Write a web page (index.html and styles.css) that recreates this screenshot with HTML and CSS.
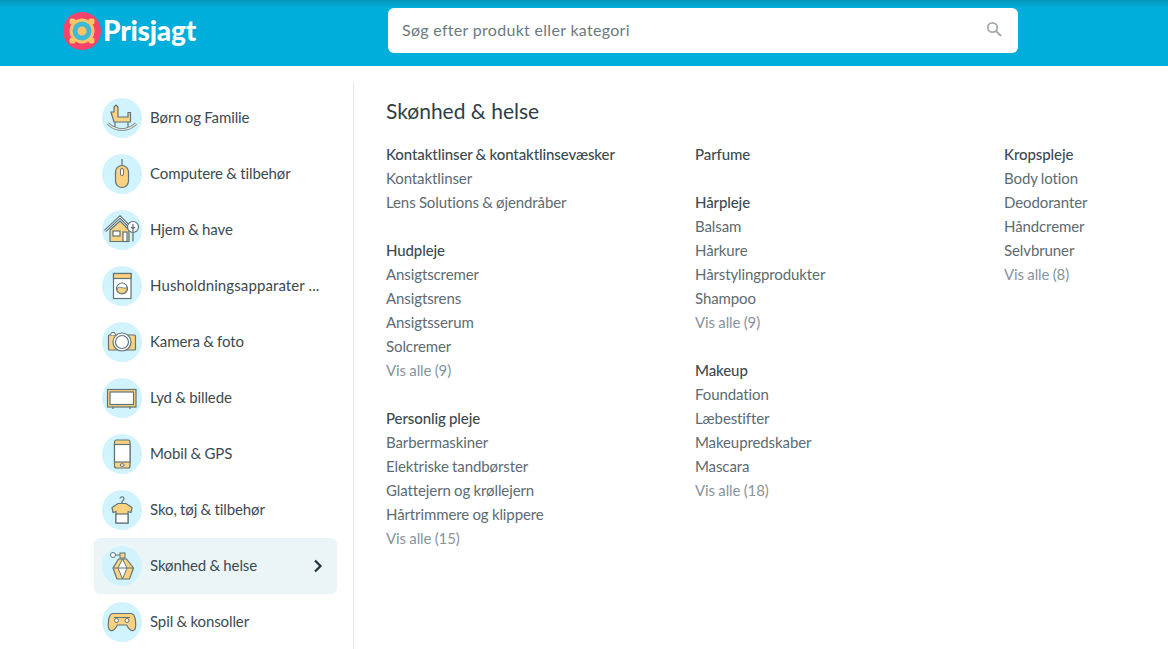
FILE: index.html
```html
<!DOCTYPE html>
<html lang="da">
<head>
    <meta charset="UTF-8">
    <meta name="viewport" content="width=device-width, initial-scale=1.0">
    <title>Prisjagt</title>
    <link rel="stylesheet" href="styles.css">
</head>
<body>

    <!-- top bar -->
    <header class="topbar">
        <a class="logo" href="#">
            <svg class="logo-mark" viewBox="0 0 38 38">
                <circle cx="19" cy="19" r="19" fill="#f5436b"/>
                <circle cx="19" cy="19" r="12.5" fill="#fbc465"/>
                <rect x="6.500" y="6.500" width="6" height="6" rx="2" fill="#fbc465"/>
                <rect x="25.500" y="6.500" width="6" height="6" rx="2" fill="#fbc465"/>
                <rect x="6.500" y="25.500" width="6" height="6" rx="2" fill="#fbc465"/>
                <rect x="25.500" y="25.500" width="6" height="6" rx="2" fill="#fbc465"/>
                <circle cx="19" cy="19" r="9.500" fill="#3fb9d6"/>
                <circle cx="19" cy="19" r="4.500" fill="#fbc465"/>
            </svg>
            <span class="logo-text">Prisjagt</span>
        </a>
        <div class="search">
            <span class="search-text">Søg efter produkt eller kategori</span>
            <svg class="search-icon" viewBox="0 0 16 16">
                <circle cx="6.500" cy="6.500" r="4.700" fill="none" stroke="#a3aaae" stroke-width="1.800"/>
                <path d="M10 10l5 5" stroke="#a3aaae" stroke-width="2" fill="none"/>
            </svg>
        </div>
    </header>

    <div class="main">
        <!-- categories -->
        <nav class="sidebar">
            <a class="cat" href="#">
                <span class="cat-icon">
                    <svg viewBox="0 0 40 40">
                        <path d="M9 14h3V9l2-2 2 2v10h10v-4.500h2.500V24H12z" fill="#fbd27f" stroke="#5f7378" stroke-width="1.200"/>
                        <path d="M13 24v6M26 24v6" stroke="#5f7378" stroke-width="1.200"/>
                        <path d="M6 25.500c8 8 20 8 28 0" fill="none" stroke="#5f7378" stroke-width="2.600"/>
                        <path d="M6 25.500c8 8 20 8 28 0" fill="none" stroke="#e8e8e0" stroke-width="1.200"/>
                    </svg>
                </span>
                <span class="cat-name">Børn og Familie</span>
            </a>
            <a class="cat" href="#">
                <span class="cat-icon">
                    <svg viewBox="0 0 40 40">
                        <path d="M20 5v7" stroke="#5f7378" stroke-width="1.200"/>
                        <rect x="13.500" y="11.500" width="13" height="22" rx="6.500" fill="#fbd27f" stroke="#5f7378" stroke-width="1.200"/>
                        <rect x="18.500" y="14.500" width="3" height="7" rx="1.500" fill="#fff" stroke="#5f7378"/>
                    </svg>
                </span>
                <span class="cat-name">Computere &amp; tilbehør</span>
            </a>
            <a class="cat" href="#">
                <span class="cat-icon">
                    <svg viewBox="0 0 40 40">
                        <path d="M3 21L18 7l11 11" fill="none" stroke="#5f7378" stroke-width="3"/>
                        <path d="M3 21L18 7l11 11" fill="none" stroke="#fff" stroke-width="1"/>
                        <path d="M8 20l10-9 9 9v11.500H8z" fill="#fbd27f" stroke="#5f7378" stroke-width="1.200"/>
                        <rect x="11" y="21" width="7" height="5" fill="#fff" stroke="#5f7378" stroke-width="1.200"/>
                        <rect x="21" y="22" width="4" height="9.500" fill="#fff" stroke="#5f7378" stroke-width="1.200"/>
                        <circle cx="31" cy="17" r="5.500" fill="#fff" stroke="#5f7378" stroke-width="1.200"/>
                        <path d="M31 14v17.500M29 17l2 2 2-2" fill="none" stroke="#5f7378" stroke-width="1.200"/>
                    </svg>
                </span>
                <span class="cat-name">Hjem &amp; have</span>
            </a>
            <a class="cat" href="#">
                <span class="cat-icon">
                    <svg viewBox="0 0 40 40">
                        <rect x="11.500" y="7.500" width="17.500" height="25" fill="#fff" stroke="#5f7378" stroke-width="1.200"/>
                        <rect x="11.500" y="7.500" width="17.500" height="5" fill="#fbd27f" stroke="#5f7378" stroke-width="1.200"/>
                        <circle cx="20" cy="22.500" r="5.500" fill="#fff" stroke="#5f7378" stroke-width="1.200"/>
                        <path d="M15 22.500c3-3 6 1 10-1 0 3-2 6-5 6s-5-2-5-5z" fill="#fbd27f" stroke="#5f7378" stroke-width=".8"/>
                    </svg>
                </span>
                <span class="cat-name cat-name-long">Husholdningsapparater ...</span>
            </a>
            <a class="cat" href="#">
                <span class="cat-icon">
                    <svg viewBox="0 0 40 40">
                        <rect x="6.500" y="13" width="27" height="15" rx="1" fill="#fbd27f" stroke="#5f7378" stroke-width="1.200"/>
                        <path d="M8.500 13l1-2.500h3l1 2.500" fill="#fff" stroke="#5f7378" stroke-width="1"/>
                        <circle cx="20" cy="20" r="9" fill="#fff" stroke="#5f7378" stroke-width="1.200"/>
                        <circle cx="20" cy="20" r="6.500" fill="#fff" stroke="#5f7378" stroke-width="1.200"/>
                    </svg>
                </span>
                <span class="cat-name">Kamera &amp; foto</span>
            </a>
            <a class="cat" href="#">
                <span class="cat-icon">
                    <svg viewBox="0 0 40 40">
                        <rect x="5.500" y="11.500" width="28.500" height="17.500" fill="#fbd27f" stroke="#5f7378" stroke-width="1.200"/>
                        <rect x="8" y="14" width="23.500" height="12.500" fill="#fff" stroke="#5f7378" stroke-width="1.200"/>
                        <path d="M11 29v2M28 29v2" stroke="#5f7378" stroke-width="1.200"/>
                    </svg>
                </span>
                <span class="cat-name">Lyd &amp; billede</span>
            </a>
            <a class="cat" href="#">
                <span class="cat-icon">
                    <svg viewBox="0 0 40 40">
                        <rect x="12.500" y="6" width="15.500" height="28" rx="2" fill="#fbd27f" stroke="#5f7378" stroke-width="1.200"/>
                        <rect x="12.500" y="10.500" width="15.500" height="17.500" fill="#fff" stroke="#5f7378" stroke-width="1.200"/>
                        <ellipse cx="20.200" cy="31" rx="2" ry="1.300" fill="#fff" stroke="#5f7378"/>
                    </svg>
                </span>
                <span class="cat-name">Mobil &amp; GPS</span>
            </a>
            <a class="cat" href="#">
                <span class="cat-icon">
                    <svg viewBox="0 0 40 40">
                        <path d="M18 8.500a2 2 0 1 1 3 2l-1 1v2" fill="none" stroke="#5f7378" stroke-width="1.200"/>
                        <path d="M16 13.500h8l6 4-1 5-3-1V33H14V21.500l-3 1-1-5z" fill="#fbd27f" stroke="#5f7378" stroke-width="1.200"/>
                        <rect x="14" y="24" width="12" height="9" fill="#fff" stroke="#5f7378" stroke-width="1.200"/>
                    </svg>
                </span>
                <span class="cat-name">Sko, tøj &amp; tilbehør</span>
            </a>
            <a class="cat cat-active" href="#">
                <span class="cat-icon">
                    <svg viewBox="0 0 40 40">
                        <circle cx="11" cy="9" r="2.500" fill="#fff" stroke="#5f7378"/>
                        <path d="M13.500 9h5" stroke="#5f7378"/>
                        <rect x="18" y="7" width="5" height="5" fill="#fbd27f" stroke="#5f7378"/>
                        <path d="M16.500 13h8l7 9-4 11H15l-4-11z" fill="#fbd27f" stroke="#5f7378" stroke-width="1.200"/>
                        <path d="M20.500 13l4.500 9-4.500 11-4.500-11z" fill="#fff" stroke="#5f7378"/>
                        <path d="M11 22h20.500" stroke="#5f7378"/>
                    </svg>
                </span>
                <span class="cat-name">Skønhed &amp; helse</span>
                <svg class="cat-arrow" viewBox="0 0 10 14">
                    <path d="M2 1.500l5.500 5.500L2 12.500" fill="none" stroke="#1e3540" stroke-width="2.200"/>
                </svg>
            </a>
            <a class="cat" href="#">
                <span class="cat-icon">
                    <svg viewBox="0 0 40 40">
                        <path d="M11 11.500h18c3 0 4 3 4.500 7.500s.5 8.500-2 9.500-5-2-7-5.500H15.500c-2 3.500-4.500 6.500-7 5.500s-2.500-5-2-9.500 1.500-7.500 4.500-7.500z" fill="#fbd27f" stroke="#5f7378" stroke-width="1.200"/>
                        <circle cx="14.500" cy="18.500" r="2" fill="#fff" stroke="#5f7378"/>
                        <circle cx="25" cy="18.500" r="2" fill="#fff" stroke="#5f7378"/>
                        <path d="M12 15.500h16" stroke="#5f7378"/>
                    </svg>
                </span>
                <span class="cat-name">Spil &amp; konsoller</span>
            </a>
        </nav>

        <!-- subcategories -->
        <section class="content">
            <h2 class="content-title">Skønhed &amp; helse</h2>
            <div class="columns">
                <div class="column">
                    <div class="group">
                        <div class="group-title">Kontaktlinser &amp; kontaktlinsevæsker</div>
                        <a href="#">Kontaktlinser</a>
                        <a href="#">Lens Solutions &amp; øjendråber</a>
                    </div>
                    <div class="group">
                        <div class="group-title">Hudpleje</div>
                        <a href="#">Ansigtscremer</a>
                        <a href="#">Ansigtsrens</a>
                        <a href="#">Ansigtsserum</a>
                        <a href="#">Solcremer</a>
                        <a class="more" href="#">Vis alle (9)</a>
                    </div>
                    <div class="group">
                        <div class="group-title">Personlig pleje</div>
                        <a href="#">Barbermaskiner</a>
                        <a href="#">Elektriske tandbørster</a>
                        <a href="#">Glattejern og krøllejern</a>
                        <a href="#">Hårtrimmere og klippere</a>
                        <a class="more" href="#">Vis alle (15)</a>
                    </div>
                </div>
                <div class="column">
                    <div class="group">
                        <div class="group-title">Parfume</div>
                    </div>
                    <div class="group">
                        <div class="group-title">Hårpleje</div>
                        <a href="#">Balsam</a>
                        <a href="#">Hårkure</a>
                        <a href="#">Hårstylingprodukter</a>
                        <a href="#">Shampoo</a>
                        <a class="more" href="#">Vis alle (9)</a>
                    </div>
                    <div class="group">
                        <div class="group-title">Makeup</div>
                        <a href="#">Foundation</a>
                        <a href="#">Læbestifter</a>
                        <a href="#">Makeupredskaber</a>
                        <a href="#">Mascara</a>
                        <a class="more" href="#">Vis alle (18)</a>
                    </div>
                </div>
                <div class="column">
                    <div class="group">
                        <div class="group-title">Kropspleje</div>
                        <a href="#">Body lotion</a>
                        <a href="#">Deodoranter</a>
                        <a href="#">Håndcremer</a>
                        <a href="#">Selvbruner</a>
                        <a class="more" href="#">Vis alle (8)</a>
                    </div>
                </div>
            </div>
        </section>
    </div>

</body>
</html>
```
FILE: styles.css
```css
html, body {
    height: 100%;
}

body {
    font-family: Lato, "Open Sans", sans-serif;
    font-size: 15px;
    letter-spacing: -0.1px;
    word-spacing: -0.4px;
    color: #3b4a50;
    background-color: #ffffff;
    margin: 0;
    overflow: hidden;
}

a {
    color: inherit;
    text-decoration: none;
}

.topbar {
    display: flex;
    align-items: center;
    height: 66px;
    padding: 0 150px 0 63px;
    box-sizing: border-box;
    background: linear-gradient(#0795b9 0, #00aedb 8px);
}

.logo {
    display: flex;
    align-items: center;
    width: 325px;
    margin-top: -5px;
}

.logo-mark {
    width: 38px;
    height: 38px;
}

.logo-text {
    font-size: 28px;
    font-weight: 900;
    color: #ffffff;
    margin: 0 0 2px 2px;
    letter-spacing: -0.2px;
}

.search {
    display: flex;
    align-items: center;
    justify-content: space-between;
    width: 630px;
    height: 45px;
    margin-top: -5px;
    padding: 0 16px 0 14px;
    box-sizing: border-box;
    background-color: #ffffff;
    border-radius: 6px;
}

.search-text {
    font-size: 16px;
    letter-spacing: 0.3px;
    word-spacing: 0;
    color: #6c7a80;
    margin-bottom: 2px;
}

.search-icon {
    width: 16px;
    height: 16px;
    margin-bottom: 3px;
}

.main {
    display: flex;
    padding: 16px 0 0 94px;
}

.sidebar {
    width: 243px;
    padding: 8px 16px 0 0;
    border-right: 1px solid #e4e8ea;
    flex-shrink: 0;
}

.cat {
    display: flex;
    align-items: center;
    height: 56px;
    padding: 0 14px 0 8px;
    border-radius: 6px;
}

.cat-active {
    background-color: #ebf4f7;
}

.cat-icon {
    width: 40px;
    height: 40px;
    border-radius: 50%;
    background-color: #d1f3fe;
    flex-shrink: 0;
}

.cat-icon svg {
    display: block;
    width: 40px;
    height: 40px;
}

.cat-name {
    flex: 1;
    margin: 0 0 2px 8px;
    white-space: nowrap;
}

.cat-name-long {
    letter-spacing: 0.1px;
    word-spacing: 0;
}

.cat-arrow {
    width: 10px;
    height: 14px;
}

.content {
    flex: 1;
    padding: 15px 0 0 32px;
}

.content-title {
    font-size: 21px;
    font-weight: 400;
    line-height: 28px;
    letter-spacing: 0;
    word-spacing: 0;
    color: #2f3e45;
    margin: 0 0 17px;
}

.columns {
    display: grid;
    grid-template-columns: 309px 309px 1fr;
}

.group {
    margin-bottom: 24px;
}

.group a, .group-title {
    display: block;
    line-height: 24px;
    white-space: nowrap;
}

.group-title {
    font-weight: 500;
    color: #3b4a50;
}

.group a {
    color: #5c6b71;
}

.group a.more {
    color: #87949a;
}
```
